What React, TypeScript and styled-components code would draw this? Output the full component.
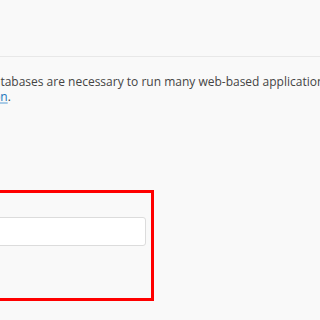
import React from "react";
import styled, { createGlobalStyle } from "styled-components";

const Global = createGlobalStyle`
  html, body { margin: 0; padding: 0; background: #f9f9f9; }
  body { font-family: "Open Sans", "Liberation Sans", sans-serif; overflow: hidden; }
  #root { width: 320px; height: 320px; overflow: hidden; }
`;

const Page = styled.div`
  width: 320px;
  height: 320px;
  background: #f9f9f9;
  display: flex;
  flex-direction: column;
  overflow: hidden;
`;

const Header = styled.div`
  height: 56px;
  flex-shrink: 0;
  border-bottom: 1px solid #e8e8e8;
`;

const Intro = styled.p`
  margin: 17px 0 0 -78px;
  width: 900px;
  font-size: 12px;
  line-height: 15px;
  color: #444;
`;

const Line = styled.span<{ $indent: number }>`
  display: block;
  white-space: nowrap;
  padding-left: ${(p) => p.$indent}px;
`;

const DocLink = styled.a`
  color: #1b75bb;
  text-decoration: underline;
  text-decoration-color: #a9cbe6;
  text-decoration-thickness: 2px;
  text-underline-offset: 1px;
`;

const Highlight = styled.section`
  margin: 86px 0 0 -100px;
  width: 254px;
  height: 111px;
  box-sizing: border-box;
  border: 3px solid #ff0000;
  padding: 24px 5px 0 20px;
`;

const Field = styled.input`
  display: block;
  width: 100%;
  height: 29px;
  box-sizing: border-box;
  border: 1px solid #dcdcdc;
  border-radius: 3px;
  background: #fff;
  outline: none;
`;

export default function App() {
  return (
    <>
      <Global />
      <Page>
        <Header />
        <Intro>
          <Line $indent={63}>
            Databases are necessary to run many web-based applications, such as bulletin boards, content management systems, and online shopping carts.
          </Line>
          <Line $indent={0}>
            <DocLink href="#">documentation</DocLink>.
          </Line>
        </Intro>
        <Highlight>
          <Field type="text" aria-label="New Database" />
        </Highlight>
      </Page>
    </>
  );
}
